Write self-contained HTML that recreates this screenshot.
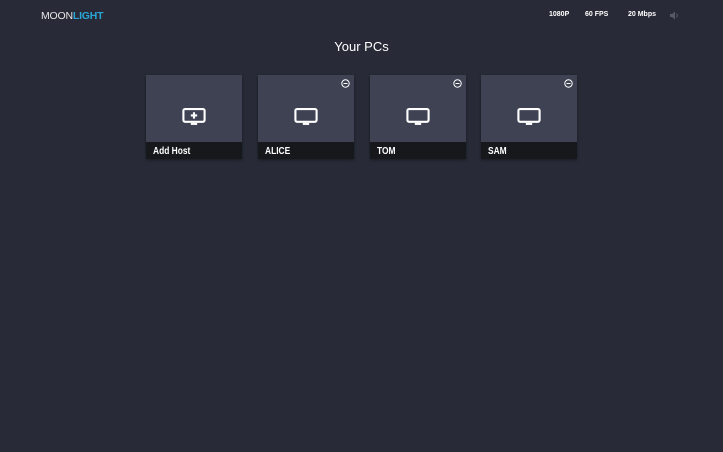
<!DOCTYPE html>
<html><head><style>
body{margin:0;width:723px;height:452px;background:#282b37;font-family:"Liberation Sans",sans-serif;position:relative;overflow:hidden}
.logo{position:absolute;left:41px;top:10px;font-size:10.5px;letter-spacing:-0.2px;color:#e6e6e6}
.logo b{color:#2aa6d6;font-weight:bold}
.st{position:absolute;top:11px;font-size:7px;font-weight:bold;color:#fff}
h1{position:absolute;top:39px;left:0;width:723px;text-align:center;margin:0;font-weight:normal;font-size:13px;color:#fff}
.card{position:absolute;top:75px;width:96px;height:84px;background:#3e4253;box-shadow:0 1px 3px rgba(0,0,0,.4)}
.card .lb{position:absolute;left:0;bottom:0;width:96px;height:17px;background:#17181c}
.card .lb span{position:absolute;left:7px;top:3px;color:#fff;font-size:10.5px;font-weight:bold;line-height:12px;transform:scaleX(0.8);transform-origin:0 0;white-space:nowrap}
.card svg.m{position:absolute;left:36px;top:33px}
.card svg.x{position:absolute;right:4px;top:4px}
</style></head><body>
<div class="logo">MOON<b>LIGHT</b></div>
<div class="st" style="left:549px">1080P</div>
<div class="st" style="left:585px">60 FPS</div>
<div class="st" style="left:628px">20 Mbps</div>
<svg style="position:absolute;left:669px;top:11px" width="10" height="9" viewBox="0 0 10 9"><path d="M1 3h2l3-2.5v8L3 6H1z" fill="#555a66"/><path d="M7.5 2.5q1.5 2 0 4" stroke="#555a66" fill="none"/></svg>
<h1>Your PCs</h1>
<div class="card" style="left:146px"><svg class="m" width="24" height="18" viewBox="0 0 22 17"><rect x="1" y="1" width="20" height="12" rx="1.5" fill="none" stroke="#fff" stroke-width="2"/><rect x="8" y="14" width="6" height="2" fill="#fff"/><path d="M11 4v6M8 7h6" stroke="#fff" stroke-width="2"/></svg><div class="lb"><span>Add Host</span></div></div>
<div class="card" style="left:258px"><svg class="x" width="9" height="9" viewBox="0 0 9 9"><circle cx="4.5" cy="4.5" r="3.7" fill="none" stroke="#fff" stroke-width="1"/><path d="M2.5 4.5h4" stroke="#fff"/></svg><svg class="m" width="24" height="18" viewBox="0 0 22 17"><rect x="1" y="1" width="20" height="12" rx="1.5" fill="none" stroke="#fff" stroke-width="2"/><rect x="8" y="14" width="6" height="2" fill="#fff"/></svg><div class="lb"><span>ALICE</span></div></div>
<div class="card" style="left:370px"><svg class="x" width="9" height="9" viewBox="0 0 9 9"><circle cx="4.5" cy="4.5" r="3.7" fill="none" stroke="#fff" stroke-width="1"/><path d="M2.5 4.5h4" stroke="#fff"/></svg><svg class="m" width="24" height="18" viewBox="0 0 22 17"><rect x="1" y="1" width="20" height="12" rx="1.5" fill="none" stroke="#fff" stroke-width="2"/><rect x="8" y="14" width="6" height="2" fill="#fff"/></svg><div class="lb"><span>TOM</span></div></div>
<div class="card" style="left:481px"><svg class="x" width="9" height="9" viewBox="0 0 9 9"><circle cx="4.5" cy="4.5" r="3.7" fill="none" stroke="#fff" stroke-width="1"/><path d="M2.5 4.5h4" stroke="#fff"/></svg><svg class="m" width="24" height="18" viewBox="0 0 22 17"><rect x="1" y="1" width="20" height="12" rx="1.5" fill="none" stroke="#fff" stroke-width="2"/><rect x="8" y="14" width="6" height="2" fill="#fff"/></svg><div class="lb"><span>SAM</span></div></div>
</body></html>
